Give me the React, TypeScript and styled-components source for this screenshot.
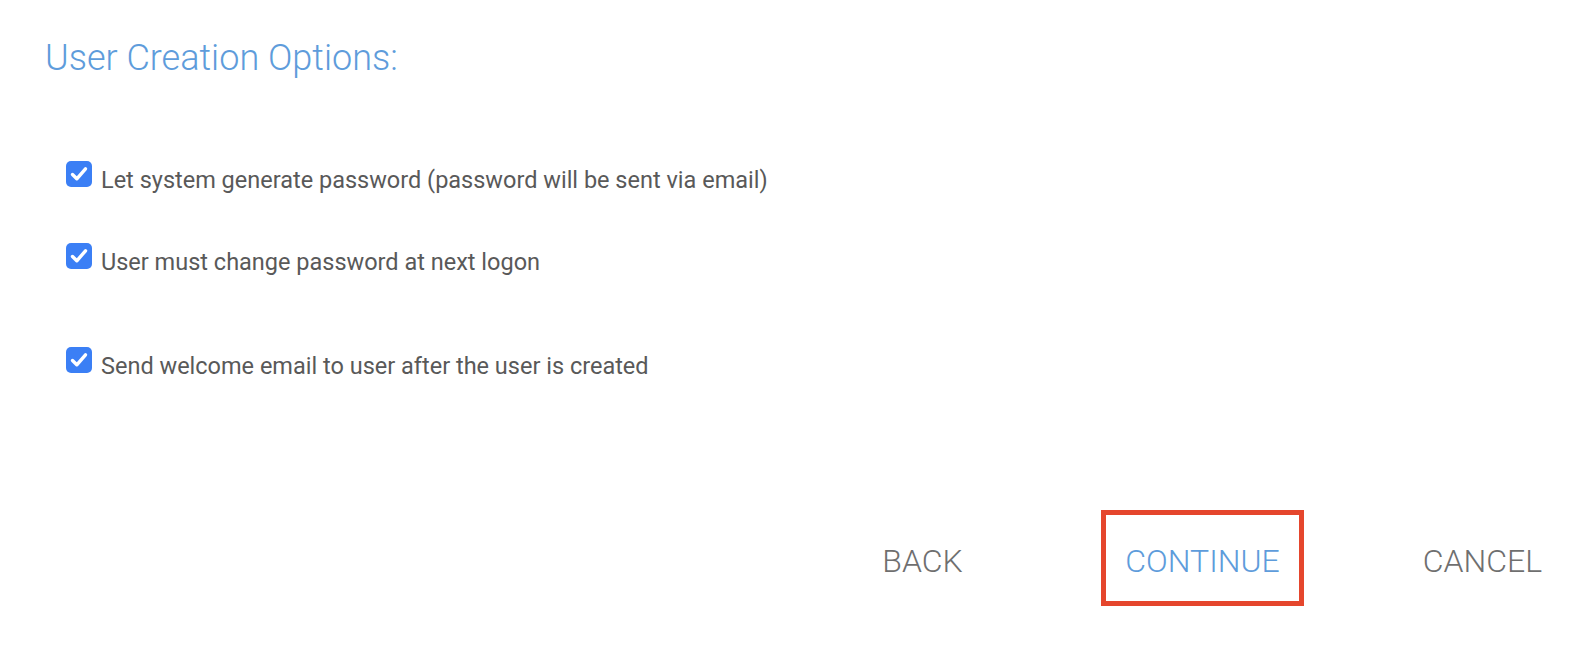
import React from "react";
import styled, { createGlobalStyle } from "styled-components";

const GlobalStyle = createGlobalStyle`
  html, body {
    margin: 0;
    padding: 0;
    background: #ffffff;
  }
  body {
    font-family: Roboto, "Liberation Sans", sans-serif;
  }
`;

const Page = styled.div`
  width: 1592px;
  height: 652px;
  box-sizing: border-box;
  padding: 36px 8px 0 45px;
  display: flex;
  flex-direction: column;
`;

const Title = styled.h2`
  margin: 0;
  font-size: 36px;
  font-weight: 300;
  color: #5e9cdb;
  line-height: 45px;
`;

const Options = styled.div`
  display: flex;
  flex-direction: column;
  padding-left: 21px;
`;

const OptionRow = styled.label<{ $top: number }>`
  display: flex;
  align-items: flex-start;
  gap: 9px;
  margin-top: ${(p) => p.$top}px;
  cursor: pointer;
`;

const Box = styled.span`
  width: 26px;
  height: 26px;
  flex: none;
  border-radius: 5px;
  background: #3b7ff5;
  display: flex;
  align-items: center;
  justify-content: center;
`;

const OptionText = styled.span`
  font-size: 23.5px;
  line-height: 26px;
  margin-top: 6px;
  color: #595959;
`;

const Actions = styled.div`
  display: flex;
  justify-content: flex-end;
  gap: 77px;
  margin-top: 131px;
`;

const ActionButton = styled.button<{ $primary?: boolean; $highlight?: boolean }>`
  width: 203px;
  height: 96px;
  box-sizing: border-box;
  padding: 5px 0 0;
  background: transparent;
  border: 5px solid ${(p) => (p.$highlight ? "#e5462d" : "transparent")};
  font-family: Roboto, "Liberation Sans", sans-serif;
  font-size: 32px;
  font-weight: 300;
  text-transform: uppercase;
  color: ${(p) => (p.$primary ? "#5e9cdb" : "#6f6f6f")};
  display: flex;
  align-items: center;
  justify-content: center;
  cursor: pointer;
`;

const options = [
  { label: "Let system generate password (password will be sent via email)", top: 80 },
  { label: "User must change password at next logon", top: 50 },
  { label: "Send welcome email to user after the user is created", top: 72 },
];

function Check() {
  return (
    <Box>
      <svg width="26" height="26" viewBox="0 0 26 26">
        <path d="M6.5 13.5 L10.8 17.8 L19.5 7.8" fill="none" stroke="#ffffff" strokeWidth="3.4" strokeLinecap="round" strokeLinejoin="round" />
      </svg>
    </Box>
  );
}

export default function App() {
  return (
    <>
      <GlobalStyle />
      <Page>
        <Title>User Creation Options:</Title>
        <Options>
          {options.map((o, i) => (
            <OptionRow key={i} $top={o.top}>
              <Check />
              <OptionText>{o.label}</OptionText>
            </OptionRow>
          ))}
        </Options>
        <Actions>
          <ActionButton>Back</ActionButton>
          <ActionButton $primary $highlight>Continue</ActionButton>
          <ActionButton>Cancel</ActionButton>
        </Actions>
      </Page>
    </>
  );
}
